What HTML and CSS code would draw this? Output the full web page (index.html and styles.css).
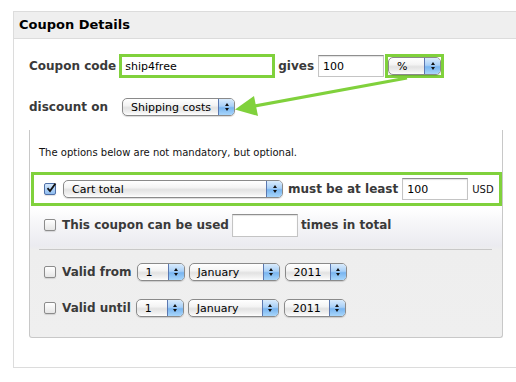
FILE: index.html
```html
<!DOCTYPE html>
<html>
<head>
<meta charset="utf-8">
<title>Coupon Details</title>
<link rel="stylesheet" href="styles.css">
</head>
<body>
<div class="box">
  <div class="head">Coupon Details</div>
  <div class="content">
    <div class="row row-code">
      <span class="lbl">Coupon code</span>
      <span class="hl-in">ship4free</span>
      <span class="lbl gives">gives</span>
      <span class="inp w-amount">100</span>
      <span class="hl-sel">
        <span class="sel w-pct"><span class="val">%</span><span class="btn"><i class="up"></i><i class="dn"></i></span></span>
      </span>
    </div>
    <div class="row row-on">
      <span class="lbl">discount on</span>
      <span class="sel w-ship"><span class="val">Shipping costs</span><span class="btn"><i class="up"></i><i class="dn"></i></span></span>
    </div>
    <div class="panel">
      <p class="note">The options below are not mandatory, but optional.</p>
      <div class="opt hl-row">
        <span class="cb checked"><svg viewBox="0 0 12 12" width="12" height="12"><path d="M2.5 6.2 L5 9 L10.5 1.5" fill="none" stroke="#111" stroke-width="1.8"/></svg></span>
        <span class="sel w-cart"><span class="val">Cart total</span><span class="btn"><i class="up"></i><i class="dn"></i></span></span>
        <span class="lbl least">must be at least</span>
        <span class="inp w-min">100</span>
        <span class="usd">USD</span>
      </div>
      <div class="opt opt-uses">
        <span class="cb"></span>
        <span class="lbl">This coupon can be used</span>
        <span class="inp w-uses"></span>
        <span class="lbl">times in total</span>
      </div>
      <div class="divider"></div>
      <div class="opt opt-from">
        <span class="cb"></span>
        <span class="lbl date-lbl">Valid from</span>
        <span class="sel w-day"><span class="val">1</span><span class="btn"><i class="up"></i><i class="dn"></i></span></span>
        <span class="sel w-month"><span class="val">January</span><span class="btn"><i class="up"></i><i class="dn"></i></span></span>
        <span class="sel w-year"><span class="val">2011</span><span class="btn"><i class="up"></i><i class="dn"></i></span></span>
      </div>
      <div class="opt opt-until">
        <span class="cb"></span>
        <span class="lbl date-lbl">Valid until</span>
        <span class="sel w-day"><span class="val">1</span><span class="btn"><i class="up"></i><i class="dn"></i></span></span>
        <span class="sel w-month"><span class="val">January</span><span class="btn"><i class="up"></i><i class="dn"></i></span></span>
        <span class="sel w-year"><span class="val">2011</span><span class="btn"><i class="up"></i><i class="dn"></i></span></span>
      </div>
    </div>
  </div>
</div>
<svg class="arrow" width="516" height="382" viewBox="0 0 516 382">
  <line x1="407" y1="78" x2="252" y2="106.5" stroke="#80d13c" stroke-width="3"/>
  <polygon points="235,109.5 254,96 258,116" fill="#80d13c"/>
</svg>
</body>
</html>
```

FILE: styles.css
```css
html, body {
  margin: 0;
  padding: 0;
  background: #fff;
}
body {
  font-family: "DejaVu Sans", Verdana, sans-serif;
  color: #3a3a3a;
  position: relative;
  width: 516px;
  height: 382px;
  overflow: hidden;
}
.box {
  margin: 11px 0 0 13px;
  border: 1px solid #dcdcdc;
  border-right: none;
  height: 355px;
}
.head {
  height: 26px;
  line-height: 26px;
  background: #efefef;
  border-bottom: 1px solid #dcdcdc;
  padding-left: 5px;
  font-weight: bold;
  font-size: 13px;
  color: #000;
}
.content {
  padding: 15px 0 0 15px;
}
.row {
  display: flex;
  align-items: center;
}
.row-code {
  height: 24px;
}
.row-on {
  height: 20px;
  margin-top: 19px;
}
.lbl {
  font-weight: bold;
  font-size: 12px;
  color: #3a3a3a;
  white-space: nowrap;
}
.hl-in {
  box-sizing: border-box;
  margin-left: 3px;
  width: 156px;
  height: 24px;
  border: 3px solid #80d13c;
  background: #fff;
  display: flex;
  align-items: center;
  padding-left: 3px;
  font-size: 11px;
  color: #000;
}
.gives {
  margin-left: 3px;
}
.inp {
  box-sizing: border-box;
  height: 22px;
  border: 1px solid #c4c4c4;
  border-top-color: #8f8f8f;
  background: #fff;
  box-shadow: inset 0 1px 1px rgba(0,0,0,0.12);
  display: flex;
  align-items: center;
  padding-left: 4px;
  font-size: 11px;
  color: #000;
}
.w-amount {
  width: 66px;
  margin-left: 4px;
}
.hl-sel {
  box-sizing: border-box;
  width: 59px;
  height: 24px;
  border: 3px solid #80d13c;
  margin-left: 1px;
  display: flex;
  align-items: center;
  justify-content: center;
}
.sel {
  box-sizing: border-box;
  height: 18px;
  border: 1px solid #8a8a8a;
  border-radius: 5px;
  background: linear-gradient(to bottom, #ffffff 0%, #f4f4f4 40%, #e2e2e2 55%, #f2f2f2 85%, #ffffff 100%);
  box-shadow: 0 1px 1px rgba(0,0,0,0.15);
  display: flex;
  align-items: stretch;
  overflow: hidden;
  font-size: 11px;
  color: #000;
}
.sel .val {
  flex: 1;
  display: flex;
  align-items: center;
  padding-left: 8px;
  white-space: nowrap;
}
.sel .btn {
  width: 15px;
  border-left: 1px solid #5b78b0;
  background: linear-gradient(to bottom, #d9ebfc 0%, #a9d0f7 45%, #79b5f0 55%, #a8d6fb 100%);
  display: flex;
  flex-direction: column;
  align-items: center;
  justify-content: center;
  gap: 2px;
}
.sel .btn i {
  display: block;
  width: 0;
  height: 0;
  border-left: 2.5px solid transparent;
  border-right: 2.5px solid transparent;
}
.sel .btn .up {
  border-bottom: 3px solid #111;
}
.sel .btn .dn {
  border-top: 3px solid #111;
}
.w-pct {
  width: 55px;
}
.w-ship {
  width: 113px;
  margin-left: 14px;
}
.panel {
  box-sizing: border-box;
  margin-top: 13px;
  width: 474px;
  height: 208px;
  border: 1px solid #c8c8c8;
  border-top: none;
  background: linear-gradient(to bottom, #ffffff 0%, #ffffff 38%, #f7f7f9 44%, #ebebf0 56%, #eeeeee 58%, #efefef 100%);
  border-radius: 0 0 3px 3px;
}
.note {
  margin: 0;
  padding: 16px 0 0 9px;
  line-height: 14px;
  font-size: 10px;
  color: #111;
}
.opt {
  display: flex;
  align-items: center;
  padding-left: 14px;
}
.hl-row {
  box-sizing: border-box;
  margin: 12px 0 0 1px;
  width: 471px;
  height: 34px;
  border: 3px solid #80d13c;
  padding-left: 10px;
}
.cb {
  box-sizing: border-box;
  width: 12px;
  height: 12px;
  border: 1px solid #8c8c8c;
  border-radius: 2px;
  background: linear-gradient(to bottom, #ffffff, #e6e6e6);
  box-shadow: 0 1px 1px rgba(0,0,0,0.12);
  flex: none;
  margin-right: 6px;
  position: relative;
}
.cb.checked {
  border-color: #4f6fa6;
  background: linear-gradient(to bottom, #d4e7fb, #8fbdf0);
}
.cb svg {
  position: absolute;
  left: 0;
  top: -2px;
}
.w-cart {
  width: 220px;
  margin-left: 1px;
}
.least {
  margin-left: 5px;
}
.w-min {
  width: 66px;
  margin-left: 4px;
}
.usd {
  margin-left: 4px;
  font-size: 10px;
  color: #111;
}
.opt-uses {
  height: 24px;
  margin-top: 7px;
}
.w-uses {
  width: 66px;
  height: 23px;
  margin: 0 3px 0 3px;
}
.divider {
  height: 1px;
  background: #c8c8c8;
  margin: 12px 10px 0 9px;
}
.opt-from {
  height: 20px;
  margin-top: 12px;
}
.opt-until {
  height: 20px;
  margin-top: 16px;
}
.date-lbl {
  margin-right: 5px;
}
.w-day {
  width: 48px;
}
.w-month {
  width: 91px;
  margin-left: 4px;
}
.w-year {
  width: 62px;
  margin-left: 5px;
}
.arrow {
  position: absolute;
  left: 0;
  top: 0;
  pointer-events: none;
}
```
